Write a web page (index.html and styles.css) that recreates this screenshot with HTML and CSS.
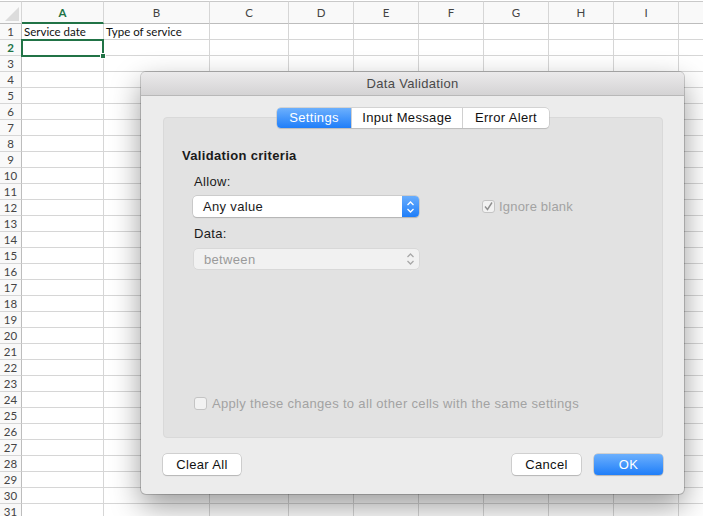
FILE: index.html
```html
<!DOCTYPE html>
<html>
<head>
	<title>Data Validation</title>
	<meta charset="utf-8">
	<link rel="stylesheet" href="styles.css">
</head>
<body>
	<div class="sheet" id="sheet">
		<div class="corner"><span class="tri"></span></div>
		<div class="colhead active">A</div>
		<div class="colhead">B</div>
		<div class="colhead">C</div>
		<div class="colhead">D</div>
		<div class="colhead">E</div>
		<div class="colhead">F</div>
		<div class="colhead">G</div>
		<div class="colhead">H</div>
		<div class="colhead">I</div>
		<div class="colhead"></div>
	</div>

	<div class="dialog">
		<div class="titlebar">Data Validation</div>
		<div class="dlg-body">
			<div class="tabs">
				<div class="tab on">Settings</div>
				<div class="tab t2">Input Message</div>
				<div class="tab t3">Error Alert</div>
			</div>
			<div class="panel">
				<div class="heading">Validation criteria</div>
				<div class="label">Allow:</div>
				<div class="row">
					<div class="select">
						<span>Any value</span>
						<span class="stepper">
							<svg width="9" height="14" viewBox="0 0 9 14"><path d="M1.5 5 L4.5 2 L7.5 5 M1.5 9 L4.5 12 L7.5 9" fill="none" stroke="#fff" stroke-width="1.3"/></svg>
						</span>
					</div>
					<label class="check dis">
						<span class="box">
							<svg width="11" height="11" viewBox="0 0 11 11"><path d="M2 5.5 L4.5 8.5 L9 1.5" fill="none" stroke="#8f8f8f" stroke-width="1.4"/></svg>
						</span>
						Ignore blank
					</label>
				</div>
				<div class="label">Data:</div>
				<div class="select dis">
					<span>between</span>
					<span class="stepper">
						<svg width="9" height="14" viewBox="0 0 9 14"><path d="M1.5 5 L4.5 2 L7.5 5 M1.5 9 L4.5 12 L7.5 9" fill="none" stroke="#a8a8a8" stroke-width="1.3"/></svg>
					</span>
				</div>
				<div class="spacer"></div>
				<label class="check dis apply">
					<span class="box"></span>
					Apply these changes to all other cells with the same settings
				</label>
			</div>
			<div class="footer">
				<button class="btn">Clear All</button>
				<div class="grow"></div>
				<button class="btn">Cancel</button>
				<button class="btn btn-ok">OK</button>
			</div>
		</div>
	</div>

	<script type="text/javascript">
		var sheet = document.getElementById('sheet')
		var html = ''
		for (var r = 1; r <= 31; r++) {
			html += `<div class="rowhead${r == 2 ? ' active' : ''}">${r}</div>`
			for (var c = 0; c < 10; c++) {
				var text = ''
				if (r == 1 && c == 0) text = 'Service date'
				if (r == 1 && c == 1) text = 'Type of service'
				if (r == 2 && c == 0) {
					html += `<div class="cell sel"><span class="handle"></span></div>`
				} else {
					html += `<div class="cell">${text}</div>`
				}
			}
		}
		sheet.innerHTML += html
	</script>
</body>
</html>
```

FILE: styles.css
```css
* {
	box-sizing: border-box;
}
body {
	margin: 0;
	overflow: hidden;
	background: #fff;
	font-family: "Liberation Sans", Arial, sans-serif;
}

/* spreadsheet */
.sheet {
	display: grid;
	grid-template-columns: 22px 82px 106px 79px 65px 65px 65px 65px 65px 65px 65px;
	grid-auto-rows: 16px;
	grid-template-rows: 23px;
	padding-top: 1px;
	width: 100%;
	height: 516px;
	overflow: hidden;
	font-family: Lato, "Open Sans", sans-serif;
	font-size: 11px;
	color: #111;
}
.corner, .colhead {
	border-top: 1px solid #c9c9c9;
	border-bottom: 1px solid #bdbdbd;
	border-right: 1px solid #d6d6d6;
	background: #f9f9f9;
}
.corner {
	position: relative;
}
.corner .tri {
	position: absolute;
	right: 2px;
	bottom: 2px;
	width: 0;
	height: 0;
	border-left: 14px solid transparent;
	border-bottom: 14px solid #dcdcdc;
}
.colhead {
	text-align: center;
	line-height: 21px;
	color: #444;
	font-size: 11.5px;
}
.colhead.active {
	color: #217346;
	font-weight: bold;
	border-bottom: 2px solid #217346;
}
.rowhead {
	background: #f9f9f9;
	border-right: 1px solid #bdbdbd;
	border-bottom: 1px solid #d6d6d6;
	text-align: center;
	line-height: 16px;
	font-size: 11.5px;
	color: #444;
}
.rowhead.active {
	color: #217346;
	font-weight: bold;
}
.cell {
	border-right: 1px solid #d6d6d6;
	border-bottom: 1px solid #d6d6d6;
	line-height: 16px;
	padding-left: 2px;
	white-space: nowrap;
	position: relative;
	font-size: 11.5px;
}
.cell.sel {
	border: 2px solid #217346;
	margin: -1px 0 -1px -1px;
	z-index: 2;
}
.handle {
	position: absolute;
	right: -4px;
	bottom: -4px;
	width: 6px;
	height: 6px;
	background: #217346;
	border: 1px solid #fff;
}

/* dialog */
.dialog {
	position: absolute;
	left: 141px;
	top: 72px;
	width: 543px;
	height: 422px;
	background: #ececec;
	border-radius: 5px;
	box-shadow: 0 0 0 1px rgba(0,0,0,0.18), 0 12px 30px rgba(0,0,0,0.4);
	display: flex;
	flex-direction: column;
	font-size: 13px;
	letter-spacing: 0.33px;
	color: #1a1a1a;
	z-index: 5;
}
.titlebar {
	height: 24px;
	line-height: 23px;
	text-align: center;
	color: #4a4a4a;
	background: linear-gradient(#ebeaeb, #d4d3d4);
	border-bottom: 1px solid #b8b8b8;
	border-radius: 5px 5px 0 0;
}
.dlg-body {
	flex: 1;
	display: flex;
	flex-direction: column;
	padding: 12px 21px 20px 22px;
}
.tabs {
	display: flex;
	align-self: center;
	height: 20px;
	position: relative;
	z-index: 1;
	margin-bottom: -11px;
	background: #fff;
	border-radius: 4px;
	box-shadow: 0 0 0 0.5px #b9b9b9, 0 1px 1px rgba(0,0,0,0.15);
}
.tab {
	line-height: 20px;
	text-align: center;
	border-left: 1px solid #d0d0d0;
	color: #111;
}
.tab:first-child {
	border-left: none;
	border-radius: 4px 0 0 4px;
}
.tab.on {
	color: #fff;
	background: linear-gradient(#6cb0fd, #1f7ef9);
	width: 74px;
}
.tab.t2 {
	width: 111px;
}
.tab.t3 {
	width: 87px;
}
.panel {
	height: 321px;
	background: #e2e2e2;
	border: 1px solid #d9d9d9;
	border-radius: 4px;
	padding: 30px 19px 26px 18px;
	display: flex;
	flex-direction: column;
}
.heading {
	font-weight: bold;
	margin-bottom: 10px;
}
.label {
	margin-left: 12px;
	margin-bottom: 7px;
	margin-top: 1px;
}
.row {
	display: flex;
	align-items: center;
	margin-bottom: 8px;
}
.select {
	margin-left: 11px;
	width: 226px;
	height: 21px;
	background: #fff;
	border-radius: 4px;
	box-shadow: 0 0 0 0.5px #b5b5b5, 0 1px 1px rgba(0,0,0,0.2);
	display: flex;
	align-items: center;
	padding-left: 10px;
}
.select span:first-child {
	flex: 1;
}
.stepper {
	width: 17px;
	height: 21px;
	border-radius: 0 4px 4px 0;
	background: linear-gradient(#68adfd, #1f7ef9);
	display: flex;
	align-items: center;
	justify-content: center;
}
.select.dis {
	margin-left: 12px;
	width: 225px;
	height: 20px;
	margin-top: 1px;
	background: #f1f1f1;
	color: #9a9a9a;
	box-shadow: 0 0 0 0.5px #cdcdcd;
}
.select.dis .stepper {
	background: none;
}
.check {
	display: flex;
	align-items: center;
	gap: 4px;
}
.check.dis {
	color: #a3a3a3;
}
.row .check {
	margin-left: 63px;
	letter-spacing: 0.2px;
}
.box {
	width: 13px;
	height: 13px;
	border: 1px solid #c4c4c4;
	border-radius: 3px;
	background: #f2f2f2;
	display: flex;
	align-items: center;
	justify-content: center;
}
.spacer {
	flex: 1;
}
.apply {
	margin-left: 12px;
	gap: 5px;
}
.footer {
	display: flex;
	margin-top: 16px;
	gap: 13px;
}
.grow {
	flex: 1;
}
.btn {
	height: 21px;
	width: 69px;
	font-family: "Liberation Sans", Arial, sans-serif;
	font-size: 13px;
	letter-spacing: 0.33px;
	color: #111;
	background: #fff;
	border: none;
	border-radius: 4px;
	box-shadow: 0 0 0 0.5px #b3b3b3, 0 1px 1px rgba(0,0,0,0.2);
	padding: 0;
}
.btn:first-child {
	width: 78px;
}
.btn-ok {
	color: #fff;
	background: linear-gradient(#6cb0fd, #1f7ef9);
}
```
